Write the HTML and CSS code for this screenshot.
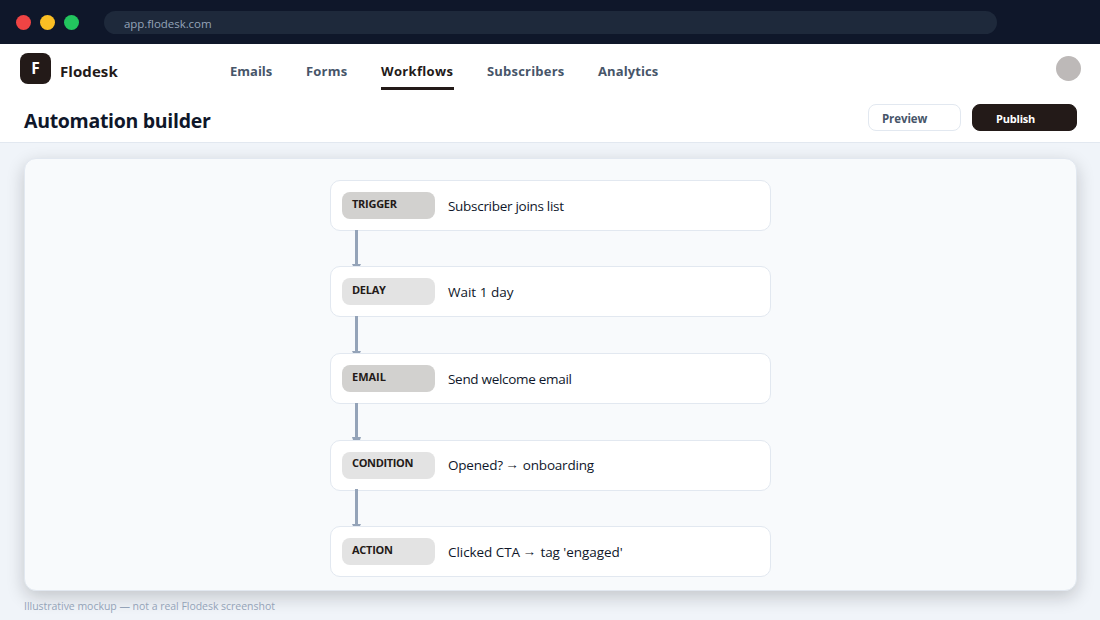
FILE: index.html
```html
<!DOCTYPE html>
<html lang="en">
<head>
    <meta charset="UTF-8">
    <meta name="viewport" content="width=device-width, initial-scale=1.0">
    <title>Automation builder - Flodesk</title>
    <link rel="stylesheet" href="styles.css">
</head>
<body>
    <div class="browser-bar">
        <span class="dot red"></span>
        <span class="dot yellow"></span>
        <span class="dot green"></span>
        <div class="url">app.flodesk.com</div>
    </div>

    <header class="header">
        <div class="logo">F</div>
        <div class="brand">Flodesk</div>
        <nav class="nav">
            <a class="emails">Emails</a>
            <a class="forms">Forms</a>
            <a class="workflows active">Workflows</a>
            <a class="subscribers">Subscribers</a>
            <a class="analytics">Analytics</a>
        </nav>
        <div class="avatar"></div>
    </header>

    <div class="title-bar">
        <h1>Automation builder</h1>
        <button class="btn preview">Preview</button>
        <button class="btn publish">Publish</button>
    </div>

    <main class="canvas">
        <div class="step">
            <span class="tag dark">TRIGGER</span>
            <span class="label join">Subscriber joins list</span>
        </div>
        <div class="connector"></div>
        <div class="step">
            <span class="tag">DELAY</span>
            <span class="label">Wait 1 day</span>
        </div>
        <div class="connector long"></div>
        <div class="step">
            <span class="tag dark email">EMAIL</span>
            <span class="label send">Send welcome email</span>
        </div>
        <div class="connector long tall-tip"></div>
        <div class="step">
            <span class="tag condition">CONDITION</span>
            <span class="label opened">Opened? <span class="arrow">→</span> onboarding</span>
        </div>
        <div class="connector early"></div>
        <div class="step">
            <span class="tag">ACTION</span>
            <span class="label clicked">Clicked CTA <span class="arrow">→</span> tag 'engaged'</span>
        </div>
    </main>

    <footer class="note">Illustrative mockup — not a real Flodesk screenshot</footer>
</body>
</html>
```
FILE: styles.css
```css
* {
    margin: 0;
    padding: 0;
    box-sizing: border-box;
}

body {
    width: 1100px;
    height: 620px;
    overflow: hidden;
    background: #f0f4f9;
    font-family: 'Open Sans', 'Noto Sans', sans-serif;
    color: #0f172a;
    white-space: nowrap;
}

/* Browser chrome */
.browser-bar {
    display: flex;
    align-items: center;
    gap: 9px;
    height: 44px;
    padding: 0 16px;
    background: #0f172a;
}

.dot {
    width: 15px;
    height: 15px;
    border-radius: 50%;
    margin-top: 1px;
}

.red { background: #ef4444; }
.yellow { background: #fbbf24; }
.green { background: #22c55e; }

.url {
    width: 893px;
    height: 23px;
    margin: 1px 0 0 16px;
    padding-left: 20px;
    border-radius: 12px;
    background: #1e293b;
    color: #94a3b8;
    font-size: 11.5px;
    line-height: 25px;
    letter-spacing: -0.05px;
}

/* Header */
.header {
    display: flex;
    height: 50px;
    padding: 9px 19px 0 20px;
    background: #fff;
}

.logo {
    width: 31px;
    height: 31px;
    border-radius: 8px;
    background: #231a18;
    color: #fff;
    font-size: 15.5px;
    font-weight: 700;
    line-height: 31px;
    text-align: center;
}

.brand {
    width: 170px;
    margin-left: 9px;
    color: #231a18;
    font-size: 15px;
    font-weight: 700;
    line-height: 37px;
    letter-spacing: 0.08px;
}

.nav {
    display: flex;
    flex: 1;
    height: 37px;
    font-size: 13px;
    font-weight: 700;
    line-height: 36px;
    color: #475569;
}

.nav a {
    height: 37px;
}

.emails { width: 42px; margin-right: 34px; }
.forms { width: 41px; margin-right: 34px; letter-spacing: 0.2px; }
.workflows { width: 73px; margin-right: 33px; letter-spacing: 0.33px; }
.subscribers { width: 77px; margin-right: 34px; letter-spacing: 0.2px; }
.analytics { width: 60px; letter-spacing: 0.1px; }

.nav .active {
    border-bottom: 3px solid #231a18;
    color: #231a18;
}

.avatar {
    width: 25px;
    height: 25px;
    margin-top: 3px;
    border-radius: 50%;
    background: #bdb9b8;
}

/* Page title and actions */
.title-bar {
    display: flex;
    height: 49px;
    padding: 10px 23px 0 24px;
    border-bottom: 1px solid #e2e8f0;
    background: #fff;
}

h1 {
    flex: 1;
    font-size: 19.5px;
    font-weight: 700;
    line-height: 33px;
    letter-spacing: -0.3px;
}

.btn {
    height: 27px;
    border: 1px solid #e2e8f0;
    border-radius: 8px;
    background: #fff;
    color: #475569;
    font-family: inherit;
    font-size: 11.5px;
    font-weight: 700;
    line-height: 27px;
    text-align: left;
}

.preview {
    width: 93px;
    padding-left: 13px;
    letter-spacing: -0.1px;
}

.publish {
    width: 105px;
    margin-left: 11px;
    padding-left: 23px;
    border-color: #231a18;
    background: #231a18;
    color: #fff;
    font-size: 11px;
    letter-spacing: -0.2px;
}

/* Workflow canvas */
.canvas {
    display: flex;
    flex-direction: column;
    align-items: center;
    width: 1053px;
    height: 433px;
    margin: 15px 0 0 24px;
    padding-top: 21px;
    border: 1px solid #e2e8f0;
    border-radius: 12px;
    background: #f8fafc;
    box-shadow: 0 6px 18px rgba(15, 15, 20, 0.2);
}

.step {
    display: flex;
    width: 441px;
    height: 51px;
    padding: 11px;
    border: 1px solid #e2e8f0;
    border-radius: 10px;
    background: #fff;
}

.tag {
    width: 93px;
    height: 27px;
    padding-left: 10px;
    border-radius: 8px;
    background: #e3e3e3;
    color: #231a18;
    font-size: 11px;
    font-weight: 700;
    line-height: 24px;
    letter-spacing: -0.27px;
}

.dark {
    background: #d2d1cf;
}

.email {
    letter-spacing: 0;
}

.condition {
    line-height: 22px;
    letter-spacing: -0.36px;
}

.label {
    margin-left: 13px;
    font-size: 13.5px;
    line-height: 28px;
}

.join { letter-spacing: -0.29px; }
.send { letter-spacing: -0.3px; }
.opened { line-height: 26px; letter-spacing: -0.2px; }
.clicked { letter-spacing: -0.06px; }

.arrow {
    margin: 0 1px 0 -1px;
    line-height: 1;
    vertical-align: 1px;
}

.connector {
    position: relative;
    width: 3px;
    height: 36px;
    margin: -1px 388px 0 0;
    background: #94a3b8;
}

.connector.long {
    height: 37px;
}

.connector.early {
    height: 37px;
    margin-top: -2px;
}

/* Arrow tip tucked under the next step */
.connector::after {
    content: '';
    position: absolute;
    left: -3px;
    bottom: 0;
    width: 9px;
    height: 2px;
    background: #94a3b8;
    clip-path: polygon(0 0, 100% 0, 8px 100%, 1px 100%);
}

.connector.tall-tip::after {
    height: 3px;
}

.note {
    margin: 8px 0 0 24px;
    color: #94a3b8;
    font-size: 10.5px;
    line-height: 15px;
    letter-spacing: -0.03px;
}
```
